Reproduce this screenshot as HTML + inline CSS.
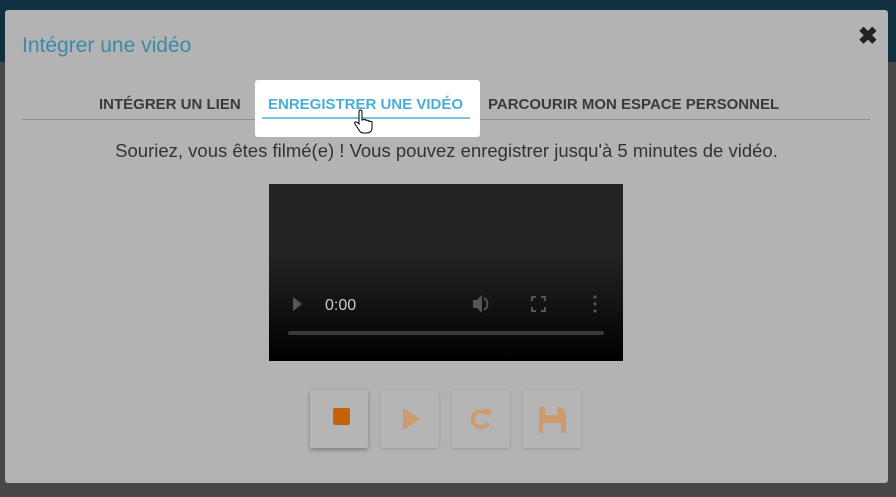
<!DOCTYPE html>
<html><head><style>
body{margin:0;width:896px;height:497px;overflow:hidden;background:#474747;font-family:"Liberation Sans",sans-serif;position:relative}
.top{position:absolute;left:0;top:0;width:896px;height:62px;background:#10303f}
.bot{position:absolute;left:0;top:470px;width:896px;height:27px;background:#474747}
.modal{position:absolute;left:5px;top:10px;width:883px;height:473px;background:#b3b3b3;border-radius:3px}
.title{position:absolute;left:17px;top:24px;font-size:21px;color:#3a8aa8}
.close{position:absolute;right:10px;top:12px;font-size:24px;font-weight:bold;color:#222}
.line{position:absolute;left:17px;top:109px;width:848px;height:1px;background:#8f8f8f}
.tab{position:absolute;top:86px;font-size:15px;font-weight:bold;color:#3a3a3a}
.hl{position:absolute;left:250px;top:70px;width:225px;height:57px;background:#fff;border-radius:3px}
.ul{position:absolute;left:257px;top:107px;width:208px;height:2px;background:#7cc4de}
.msg{position:absolute;left:0;width:883px;top:130px;text-align:center;font-size:18.5px;color:#333}
.vid{position:absolute;left:264px;top:174px;width:354px;height:177px;background:linear-gradient(#232323 40%,#000)}
.btn{position:absolute;top:380px;width:58px;height:58px;background:#b5b5b5;border-radius:2px;box-shadow:0 1px 3px rgba(0,0,0,.15)}
</style></head><body>
<div class="top"></div><div class="bot"></div>
<div class="modal">
<div class="title">Intégrer une vidéo</div>
<div class="close">✖</div>
<div class="line"></div>
<div class="hl"></div>
<div class="ul"></div>
<div class="tab" style="left:94px">INTÉGRER UN LIEN</div>
<div class="tab" style="left:263px;color:#4aaed6">ENREGISTRER UNE VIDÉO</div>
<div class="tab" style="left:483px">PARCOURIR MON ESPACE PERSONNEL</div>
<div class="msg">Souriez, vous êtes filmé(e) ! Vous pouvez enregistrer jusqu'à 5 minutes de vidéo.</div>
<div class="vid">
<svg width="354" height="177" style="position:absolute;left:0;top:0">
<polygon points="24,113 24,127 33,120" fill="#555"/>
<text x="56" y="126" font-family="Liberation Sans" font-size="16" fill="#ccc">0:00</text>
<path d="M204,116h4l5,-5v18l-5,-5h-4z" fill="#555"/><path d="M215,114a7,7 0 0 1 0,12" stroke="#555" stroke-width="2" fill="none"/>
<path d="M263,117v-4h4M272,113h4v4M276,123v4h-4M267,127h-4v-4" stroke="#555" stroke-width="2" fill="none"/>
<circle cx="326" cy="113" r="1.6" fill="#555"/><circle cx="326" cy="120" r="1.6" fill="#555"/><circle cx="326" cy="127" r="1.6" fill="#555"/>
<rect x="19" y="147" width="316" height="4" rx="2" fill="#3a3a3a"/>
</svg></div>
<div class="btn" style="left:305px;box-shadow:0 2px 4px rgba(0,0,0,.3)"><div style="position:absolute;left:23px;top:18px;width:17px;height:17px;background:#c4630a;border-radius:2px"></div></div>
<div class="btn" style="left:376px"><svg width="58" height="58"><polygon points="22,18 22,40 39,29" fill="#cc9b6e"/></svg></div>
<div class="btn" style="left:447px"><svg width="58" height="58"><path d="M35,24a8,8 0 1 0 1,9" stroke="#cc9b6e" stroke-width="4" fill="none"/><polygon points="31,19 39,19 39,27" fill="#cc9b6e"/></svg></div>
<div class="btn" style="left:518px"><svg width="58" height="58"><path d="M16,17h22l5,5v21h-5v-10h-18v10h-4zM22,17v8h12v-8z" fill="#cc9b6e"/></svg></div>
</div>
<svg style="position:absolute;left:354px;top:108px" width="20" height="26"><path d="M6,2c1.5,0 2,1 2,2v8l1,0c0,-1 3,-1 3,0v1c0,-1 3,-1 3,0v1c0,-1 3,-1 3,0v6c0,3 -2,5 -5,5h-4c-2,0 -3,-1 -4,-3l-4,-6c-1,-2 1,-3 3,-1l1,1v-12c0,-1 0.5,-2 1,-2z" fill="#fff" stroke="#000" stroke-width="1"/></svg>
</body></html>
